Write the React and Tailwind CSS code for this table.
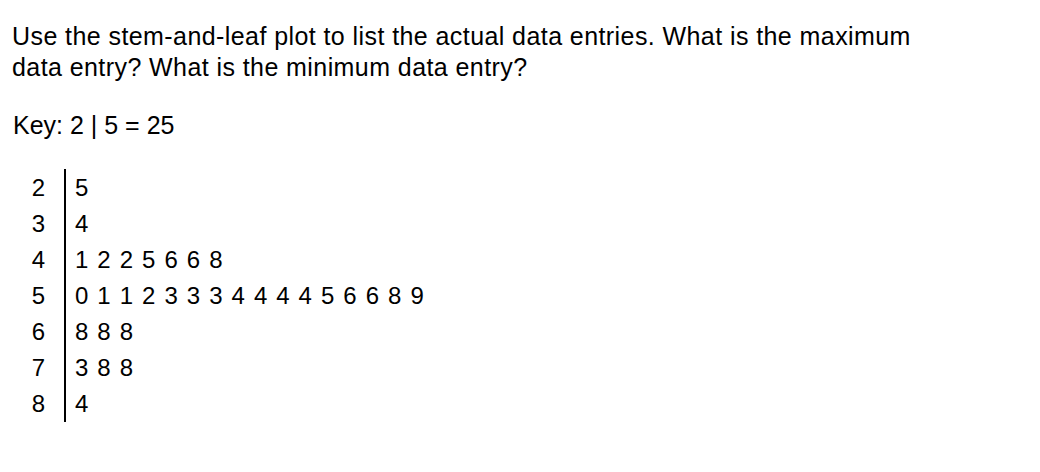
import React from "react";

const rows = [
  ["2", "5"],
  ["3", "4"],
  ["4", "1 2 2 5 6 6 8"],
  ["5", "0 1 1 2 3 3 3 4 4 4 4 5 6 6 8 9"],
  ["6", "8 8 8"],
  ["7", "3 8 8"],
  ["8", "4"],
];

export default function App() {
  return (
    <div
      className="w-[1040px] h-[472px] bg-white text-black pl-[12px] pt-[21px]"
      style={{ fontFamily: '"Liberation Sans", Arial, sans-serif' }}
    >
      <p className="text-[25px] leading-[31px] tracking-[0.42px] w-[960px]">
        Use the stem-and-leaf plot to list the actual data entries. What is the maximum
        <br />
        data entry? What is the minimum data entry?
      </p>
      <p className="text-[25px] leading-[31px] mt-[27px] pl-[1px]">Key: 2 | 5 = 25</p>
      <div className="mt-[28px] flex text-[24px]">
        <div className="flex flex-col w-[52px] pt-[1px]">
          {rows.map((r) => (
            <div key={r[0]} className="h-[36px] flex items-center justify-end pr-[19px]">
              {r[0]}
            </div>
          ))}
        </div>
        <div className="border-l-2 border-black flex flex-col pl-[9px] pt-[1px]">
          {rows.map((r) => (
            <div key={r[0]} className="h-[36px] flex items-center gap-[9px]">
              {r[1].split(" ").map((d, i) => (
                <span key={i}>{d}</span>
              ))}
            </div>
          ))}
        </div>
      </div>
    </div>
  );
}
